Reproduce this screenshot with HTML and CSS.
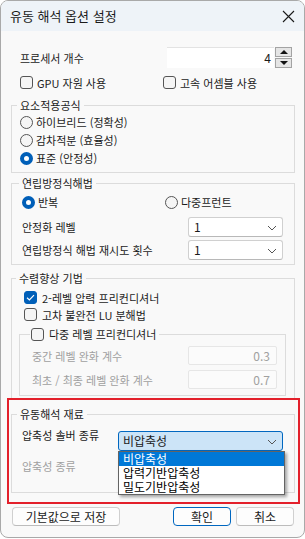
FILE: index.html
```html
<!DOCTYPE html>
<html lang="ko">
<head>
  <meta charset="UTF-8">
  <title>유동 해석 옵션 설정</title>
  <link rel="stylesheet" href="styles.css">
</head>
<body>
  <div class="window">
    <div class="titlebar">
      <span class="title">유동 해석 옵션 설정</span>
      <svg class="close" width="13" height="13" viewBox="0 0 13 13">
        <path d="M1 1 L12 12 M12 1 L1 12" stroke="#1a1a1a" stroke-width="1.1" fill="none"/>
      </svg>
    </div>

    <div class="content">
      <div class="row row-proc">
        <span>프로세서 개수</span>
        <div class="spin">
          <div class="spin-field">4</div>
          <div class="spin-btns">
            <span class="spin-btn"><span class="tri-up"></span></span>
            <span class="spin-btn"><span class="tri-down"></span></span>
          </div>
        </div>
      </div>

      <div class="row row-checks">
        <label class="opt col1"><span class="box"></span>GPU 자원 사용</label>
        <label class="opt"><span class="box"></span>고속 어셈블 사용</label>
      </div>

      <fieldset class="group group-element">
        <legend>요소적용공식</legend>
        <label class="opt line"><span class="radio"></span>하이브리드 (정확성)</label>
        <label class="opt line"><span class="radio"></span>감차적분 (효율성)</label>
        <label class="opt line"><span class="radio on"></span>표준 (안정성)</label>
      </fieldset>

      <fieldset class="group group-solver">
        <legend>연립방정식해법</legend>
        <div class="line">
          <label class="opt col1"><span class="radio on"></span>반복</label>
          <label class="opt"><span class="radio"></span>다중프런트</label>
        </div>
        <div class="field-row first">
          <span>안정화 레벨</span>
          <div class="combo">1<svg class="chev" width="10" height="6" viewBox="0 0 10 6"><path d="M1 1 L5 5 L9 1" stroke="#555" fill="none"/></svg></div>
        </div>
        <div class="field-row">
          <span>연립방정식 해법 재시도 횟수</span>
          <div class="combo">1<svg class="chev" width="10" height="6" viewBox="0 0 10 6"><path d="M1 1 L5 5 L9 1" stroke="#555" fill="none"/></svg></div>
        </div>
      </fieldset>

      <fieldset class="group group-conv">
        <legend>수렴향상 기법</legend>
        <label class="opt check-line"><span class="box on"><svg width="13" height="13" viewBox="0 0 13 13"><path d="M3 6.8 L5.4 9 L10 4.2" stroke="#fff" stroke-width="1.2" fill="none"/></svg></span>2-레벨 압력 프리컨디셔너</label>
        <label class="opt check-line"><span class="box"></span>고차 불완전 LU 분해법</label>

        <fieldset class="group group-multi">
          <legend><label class="opt"><span class="box"></span>다중 레벨 프리컨디셔너</label></legend>
          <div class="field-row off first">
            <span>중간 레벨 완화 계수</span>
            <div class="num-field">0.3</div>
          </div>
          <div class="field-row off">
            <span>최초 / 최종 레벨 완화 계수</span>
            <div class="num-field">0.7</div>
          </div>
        </fieldset>
      </fieldset>

      <div class="highlight">
        <fieldset class="group group-material">
          <legend>유동해석 재료</legend>
          <div class="material-row">
            <span class="material-label">압축성 솔버 종류</span>
            <div class="combo combo-open">비압축성<svg class="chev" width="10" height="6" viewBox="0 0 10 6"><path d="M1 1 L5 5 L9 1" stroke="#555" fill="none"/></svg>
              <ul class="dropdown">
                <li class="sel">비압축성</li>
                <li>압력기반압축성</li>
                <li>밀도기반압축성</li>
              </ul>
            </div>
          </div>
          <div class="material-row off second">
            <span>압축성 종류</span>
          </div>
        </fieldset>
      </div>

      <div class="buttons">
        <button class="btn btn-save">기본값으로 저장</button>
        <button class="btn btn-ok">확인</button>
        <button class="btn btn-cancel">취소</button>
      </div>
    </div>
  </div>
</body>
</html>
```

FILE: styles.css
```css
* {
  box-sizing: border-box;
}

body {
  margin: 0;
  background: #ffffff;
  font-family: "Noto Sans CJK KR", "Noto Sans", sans-serif;
  font-size: 11px;
  color: #1b1b1b;
}

.window {
  width: 305px;
  height: 538px;
  border: 1px solid #a9a9a9;
  border-radius: 8px;
  background: #f9f9f9;
  overflow: hidden;
}

.titlebar {
  height: 30px;
  background: #eef3f8;
  display: flex;
  align-items: center;
  justify-content: space-between;
  padding: 0 9px 0 9px;
}

.title {
  font-size: 13px;
  line-height: 16px;
}

.content {
  padding: 16px 9px 0 10px;
}

.row {
  display: flex;
  align-items: center;
}

.row-proc {
  height: 21px;
  margin: 0 3px 0 9px;
  justify-content: space-between;
}

.spin {
  display: flex;
  gap: 1px;
  height: 21px;
}

.spin-field {
  width: 107px;
  height: 21px;
  background: #ffffff;
  border-top: 1px solid #e3e3e3;
  text-align: right;
  padding-right: 3px;
  font-size: 12px;
  line-height: 20px;
}

.spin-btns {
  display: flex;
  flex-direction: column;
  gap: 1px;
}

.spin-btn {
  width: 17px;
  height: 10px;
  background: #e5e5e5;
  border: 1px solid #a3a3a3;
  display: flex;
  align-items: center;
  justify-content: center;
}

.tri-up {
  border-left: 4px solid transparent;
  border-right: 4px solid transparent;
  border-bottom: 4px solid #111;
}

.tri-down {
  border-left: 4px solid transparent;
  border-right: 4px solid transparent;
  border-top: 4px solid #111;
}

.row-checks {
  height: 19px;
  margin: 5px 0 0 9px;
}

.opt {
  display: flex;
  align-items: center;
  gap: 3px;
  white-space: nowrap;
}

.col1 {
  width: 143px;
}

.box {
  width: 13px;
  height: 13px;
  border: 1px solid #555555;
  border-radius: 3px;
  background: #f5f5f5;
  flex: none;
  margin-right: 1px;
}

.box.on {
  background: #005fb8;
  border-color: #005fb8;
}

.box.on svg {
  display: block;
  margin: -1px;
}

.radio {
  width: 13px;
  height: 13px;
  border: 1px solid #555555;
  border-radius: 50%;
  background: #f5f5f5;
  flex: none;
}

.radio.on {
  border: 4px solid #005fb8;
  background: #ffffff;
}

.group {
  margin: 0;
  border: 1px solid #dcdcdc;
  min-width: 0;
}

.group legend {
  padding: 0 3px;
  margin-left: -3px;
  line-height: 14px;
}

.line {
  display: flex;
  align-items: center;
  height: 18px;
}

.group-element {
  margin-top: 6px;
  padding: 1px 8px 5px 8px;
}

.group-solver {
  margin-top: 3px;
  padding: 3px 11px 4px 10px;
}

.field-row {
  display: flex;
  align-items: center;
  justify-content: space-between;
  height: 20px;
  margin-top: 3px;
}

.field-row.first {
  margin-top: 6px;
}

.combo {
  position: relative;
  width: 95px;
  height: 20px;
  background: #ffffff;
  border: 1px solid #d0d0d0;
  border-bottom-color: #b8b8b8;
  border-radius: 3px;
  padding-left: 5px;
  font-size: 12px;
  line-height: 18px;
}

.chev {
  position: absolute;
  right: 5px;
  top: 7px;
}

.group-conv {
  margin-top: 6px;
  padding: 4px 8px 3px 7px;
}

.check-line {
  height: 17px;
  margin-left: 5px;
  gap: 4px;
}

.group-multi {
  margin-top: 4px;
  padding: 5px 8px 6px 12px;
}

.group-multi legend {
  padding: 0 3px 0 1px;
  margin-left: -2px;
}

.group-multi .opt {
  gap: 4px;
}

.field-row.off {
  height: 19px;
  margin-top: 5px;
  color: #a0a0a0;
}

.field-row.off.first {
  margin-top: 0;
}

.num-field {
  width: 89px;
  height: 19px;
  border: 1px solid #e6e6e6;
  border-radius: 2px;
  background: #fbfbfb;
  text-align: right;
  padding-right: 6px;
  font-size: 12px;
  line-height: 17px;
}

.highlight {
  margin: -2px -5px 0 -4px;
  border: 2px solid #e3202b;
  padding: 7px 3px 9px 2px;
}

.group-material {
  padding: 10px 11px 18px 10px;
}

.group-material legend {
  margin-left: -5px;
}

.material-row {
  display: flex;
  align-items: flex-start;
  justify-content: space-between;
}

.material-label {
  margin-top: -4px;
  line-height: 16px;
}

.material-row.second {
  margin-top: 7px;
  line-height: 16px;
  color: #a0a0a0;
}

.combo-open {
  width: 165px;
  background: #cce4f7;
  border-color: #0067c0;
  padding-left: 4px;
}

.dropdown {
  position: absolute;
  top: 19px;
  left: -1px;
  width: 167px;
  margin: 0;
  padding: 0;
  list-style: none;
  background: #ffffff;
  border: 1px solid #646464;
  box-shadow: 2px 2px 3px rgba(0, 0, 0, 0.35);
}

.dropdown li {
  height: 14px;
  line-height: 13px;
  padding-left: 4px;
  color: #000;
}

.dropdown li.sel {
  background: #0078d7;
  color: #ffffff;
}

.buttons {
  display: flex;
  gap: 5px;
  margin: 3px 1px 0 1px;
}

.btn {
  height: 19px;
  width: 58px;
  padding: 0;
  font-family: inherit;
  font-size: 12px;
  line-height: 17px;
  color: #1b1b1b;
  background: #fdfdfd;
  border: 1px solid #d0d0d0;
  border-bottom-color: #bcbcbc;
  border-radius: 4px;
}

.btn-save {
  width: 108px;
  margin-right: auto;
}

.btn-ok {
  border: 1px solid #0067c0;
}
```
